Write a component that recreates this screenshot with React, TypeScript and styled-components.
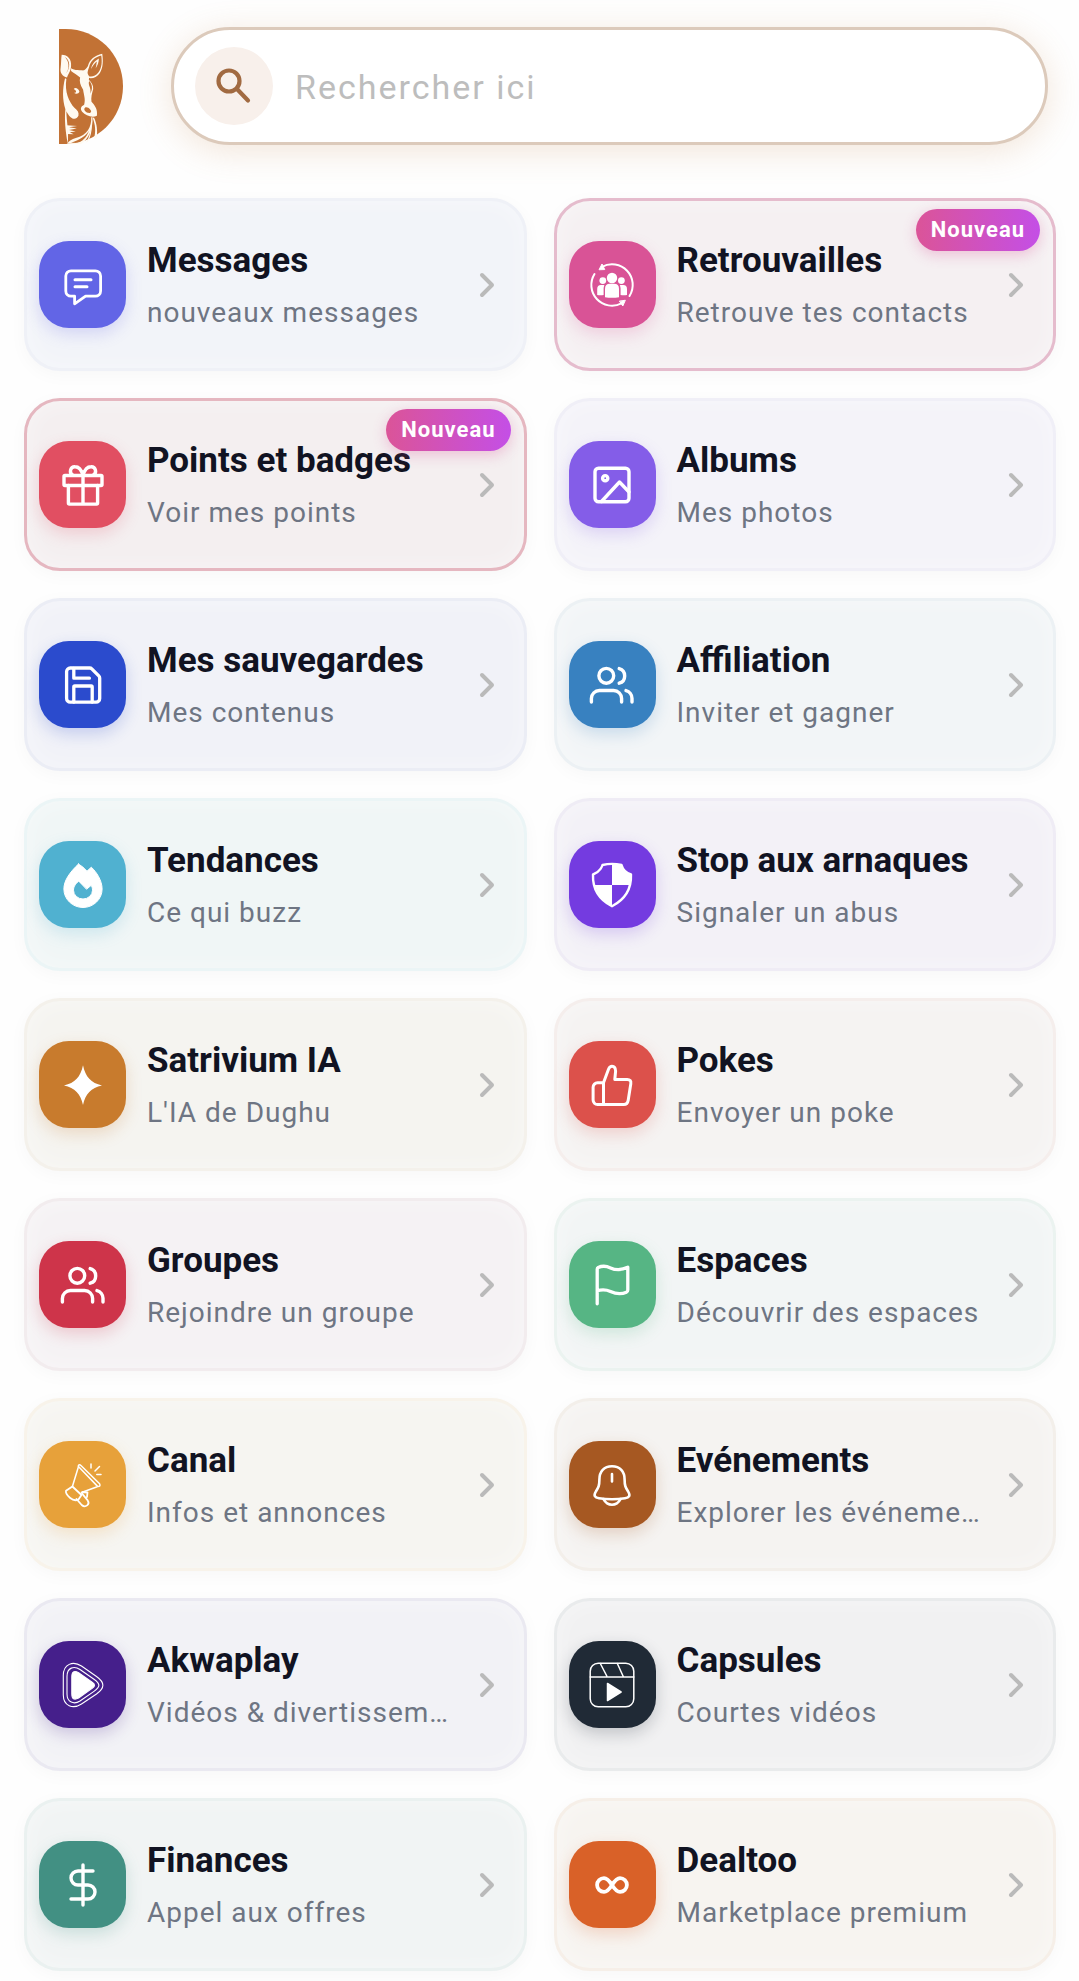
import { ReactNode } from 'react';
import styled, { createGlobalStyle } from 'styled-components';
import { ChevronRight, DollarSign } from 'lucide-react';

const GlobalStyle = createGlobalStyle`
  *, *::before, *::after {
    box-sizing: border-box;
  }
  body {
    margin: 0;
    background: #fefefe;
    font-family: Roboto, 'Liberation Sans', sans-serif;
  }
`;

const Page = styled.div`
  padding: 27px 0 10px;
  overflow: hidden;
`;

const Header = styled.header`
  display: flex;
  align-items: center;
  gap: 48px;
  padding: 0 31px 0 59px;
`;

const Logo = styled.a`
  display: flex;
  flex-shrink: 0;
`;

const SearchBar = styled.form`
  flex: 1;
  min-width: 0;
  display: flex;
  align-items: center;
  gap: 22px;
  height: 118px;
  padding: 0 28px 0 21px;
  background: #fff;
  border: 3px solid #dccabb;
  border-radius: 59px;
  box-shadow: 0 6px 34px rgba(193, 130, 70, 0.2);
`;

const SearchButton = styled.button`
  display: flex;
  align-items: center;
  justify-content: center;
  flex-shrink: 0;
  width: 78px;
  height: 78px;
  padding: 0;
  border: none;
  border-radius: 50%;
  background: #f8f0eb;
  color: #a16a41;
  cursor: pointer;
`;

const SearchInput = styled.input`
  flex: 1;
  min-width: 0;
  height: 48px;
  padding: 2px 0 0;
  border: none;
  outline: none;
  background: transparent;
  font-family: inherit;
  font-size: 34px;
  line-height: 44px;
  letter-spacing: 2px;
  color: #111322;

  &::placeholder {
    color: #bdbdbd;
    opacity: 1;
  }
`;

const Grid = styled.main`
  display: grid;
  grid-template-columns: repeat(2, minmax(0, 1fr));
  gap: 27px;
  padding: 53px 23px 0 24px;
`;

const Card = styled.a<{ $bg: string; $border: string }>`
  position: relative;
  display: flex;
  align-items: center;
  gap: 21px;
  min-height: 173px;
  padding: 12px 17px 12px 12px;
  background: ${(props) => props.$bg};
  border: 3px solid ${(props) => props.$border};
  border-radius: 36px;
  box-shadow: 0 4px 18px rgba(20, 20, 40, 0.03), inset 0 0 24px rgba(255, 255, 255, 0.4);
  text-decoration: none;
`;

const IconTile = styled.span<{ $color: string }>`
  display: flex;
  align-items: center;
  justify-content: center;
  flex-shrink: 0;
  width: 87px;
  height: 87px;
  border-radius: 30px;
  background: ${(props) => props.$color};
  box-shadow: 0 6px 16px ${(props) => props.$color}38;
  color: #fff;
`;

const CardText = styled.span`
  flex: 1;
  min-width: 0;
  display: flex;
  flex-direction: column;
  gap: 12px;
`;

const Title = styled.span`
  font-size: 35px;
  font-weight: 700;
  line-height: 44px;
  white-space: nowrap;
  color: #111322;
`;

const Subtitle = styled.span`
  font-size: 28px;
  line-height: 36px;
  letter-spacing: 1px;
  white-space: nowrap;
  overflow: hidden;
  text-overflow: ellipsis;
  color: #6e7583;
`;

const Arrow = styled(ChevronRight)`
  flex-shrink: 0;
  margin-left: -16px;
  color: #bababa;
`;

const Badge = styled.span`
  position: absolute;
  top: 8px;
  right: 13px;
  padding: 0 15px;
  border-radius: 21px;
  background: linear-gradient(90deg, #db5498, #c44fe6);
  box-shadow: 0 4px 14px rgba(219, 84, 152, 0.3);
  font-size: 22px;
  font-weight: 700;
  line-height: 42px;
  letter-spacing: 1px;
  color: #fff;
`;

type IconProps = { stroke?: number; children: ReactNode };

function Icon({ stroke = 3, children }: IconProps) {
  return (
    <svg
      width="48"
      height="48"
      viewBox="0 0 48 48"
      fill="none"
      stroke="currentColor"
      strokeWidth={stroke}
      strokeLinecap="round"
      strokeLinejoin="round"
      aria-hidden="true"
    >
      {children}
    </svg>
  );
}

const usersIcon = (
  <Icon stroke={3.4}>
    <circle cx="18.3" cy="14.8" r="7.4" />
    <path d="M3.4 41v-3.5a8 8 0 0 1 8-8h14.2a8 8 0 0 1 8 8V41" />
    <path d="M31.2 7.6a7.6 7.6 0 0 1 0 14.6M38 29.6a8 8 0 0 1 6 7.8V41" />
  </Icon>
);

const messageIcon = (
  <Icon stroke={2.8}>
    <path d="M12 9.8h24.4a5.2 5.2 0 0 1 5.2 5.2v15a5.2 5.2 0 0 1-5.2 5.2H26.6L15.6 42.8V35.2H12A5.2 5.2 0 0 1 6.8 30V15A5.2 5.2 0 0 1 12 9.8z" />
    <path d="M16 18.8h16M16 25.8h12" strokeWidth="3" />
  </Icon>
);

const reunionIcon = (
  <Icon stroke={2}>
    <path d="M14 5.8A20.700 20.700 0 0 1 41.5 35M33.500 42.400A20.700 20.700 0 0 1 6.500 13" />
    <path d="M11.200 8.400l2.800-5.400 2.600 5.200zM37.200 39.600l-2.400 5.400-3.200-4.600z" fill="currentColor" strokeWidth="1" />
    <g fill="currentColor" stroke="none">
      <circle cx="24" cy="17" r="5.2" />
      <circle cx="14.8" cy="19.6" r="3.4" />
      <circle cx="33.4" cy="19.6" r="3.4" />
      <path d="M17 36.2v-8.4q0-5 5-5h4q5 0 5 5v8.4q-7 1-14 0z" />
      <path d="M9.2 34v-6q0-4 3.8-4h2.6q.4 0 .8.2-.8 1.6-.8 3.6V34q-3 .5-6.4 0z" />
      <path d="M39 34v-6q0-4-3.8-4h-2.6q-.4 0-.8.2.8 1.6.8 3.6V34q3 .5 6.4 0z" />
    </g>
  </Icon>
);

const giftIcon = (
  <Icon stroke={3.4}>
    <rect x="5" y="14.5" width="38" height="10" rx="1" />
    <path d="M9.4 24.5v17.6q0 1 1 1h27.2q1 0 1-1V24.5M24 14.5v28.6" />
    <path d="M24 14.5C22.4 8.6 19.4 5.8 16 5.8a4.4 4.4 0 0 0-2 8.4M24 14.5c1.6-5.9 4.6-8.7 8-8.7a4.4 4.4 0 0 1 2 8.4" />
  </Icon>
);

const imageIcon = (
  <Icon stroke={3.4}>
    <rect x="7" y="7.2" width="34" height="33.6" rx="3.5" />
    <circle cx="17.2" cy="17.2" r="2.6" />
    <path d="M13.5 40.5L31.5 21 41 31" />
  </Icon>
);

const saveIcon = (
  <Icon stroke={3.3}>
    <path d="M11.2 7h19.5a3 3 0 0 1 2.1.9l7 7a3 3 0 0 1 .9 2.1V37.5a3.6 3.6 0 0 1-3.6 3.6H11.2a3.6 3.6 0 0 1-3.6-3.6V10.6A3.6 3.6 0 0 1 11.2 7z" />
    <path d="M14.8 7.5v9.7h15.600M14.8 41V26q0-1 1-1h16.4q1 0 1 1v15" />
  </Icon>
);

const flameIcon = (
  <Icon stroke={1}>
    <path
      fill="currentColor"
      fillRule="evenodd"
      d="M19.5 3C10 12 4.9 20 4.9 28a19.1 18.5 0 0 0 38.2 0C43.1 19.5 37.5 11 32.3 6.2L28 10.2Q24 5.500 19.5 3zM19.5 20.3c-3.5 3.2-5 5.700-5 8.9a9.5 8.8 0 0 0 19 0c0-1.8-.5-3.5-1.5-4.700l-4.2 3.5z"
    />
  </Icon>
);

const shieldIcon = (
  <Icon stroke={2.4}>
    <path d="M14.5 4Q24 1.800 33.5 4 35.500 11 43 13.5C43.500 27 37 38.500 24 45.200 11 38.500 4.500 27 5 13.500 12.500 11 14.500 4 14.500 4z" />
    <path
      fill="currentColor"
      stroke="none"
      d="M24 3q6 0 9.500 1 2 7 9.500 9.500.1 5.500-1.500 10.500H24zM6.500 24H24v21Q10.500 38 6.500 24z"
    />
  </Icon>
);

const sparkIcon = (
  <Icon stroke={0}>
    <path fill="currentColor" d="M24 4.3C26.5 16 32 22 43 24.5 32 27 26.5 32.5 24 44 21.5 32.5 16 27 5 24.5 16 22 21.5 16 24 4.3z" />
  </Icon>
);

const thumbIcon = (
  <Icon stroke={3}>
    <path d="M15.5 21.8L20.6 8q1.2-2.8 3.4-2.8 3.6 0 3.6 5l-.8 8.300h12.4q4.2 0 3.6 4.2l-2.6 16.5q-.7 4.3-4.4 4.3H9.5a4.4 4.4 0 0 1-4.4-4.4V26.2a4.4 4.4 0 0 1 4.4-4.4h6v21.5" />
  </Icon>
);

const flagIcon = (
  <Icon stroke={3.3}>
    <path d="M9.2 42.8V8.2Q9.2 7 10.2 6.5C14 4.8 18.5 5 22.5 6.9 28 9.4 33.5 9.3 39.8 6.3V29q0 1.6-1.4 2.2C33 33.5 28 33 22.5 30.5 17.5 28.2 14 28.3 9.2 29.8" />
  </Icon>
);

const megaphoneIcon = (
  <Icon stroke={1.5}>
    <path d="M19.2 5.2q.8-2.6 3-.4L40.600 22.800q1.400 2.800-1.800 2.800zM19.2 5.200l19.400 20.400" />
    <path d="M19.2 6.500L13.400 25.500M37.500 26L22.500 31.500" />
    <path d="M13.400 25.500l9.100 8.500-2.900 4.200q-3.800 2.600-8.400-1.200-5-4.200-4.200-7.200z" strokeWidth="1.8" />
    <path d="M17.500 38l5.200 6q2.800 2.400 5.400.400 2.600-2.200.6-5L23 32.500M23.500 31l5 .5-.5 4.5" strokeWidth="1.8" />
    <path d="M32 3v4M40.500 5.500L36 10M37.800 13.500H42" />
  </Icon>
);

const bellIcon = (
  <Icon stroke={2.6}>
    <path d="M24 5.2c-8 0-12.6 5.400-12.6 13.2 0 6.6-1 8-3.6 12.2-2.4 3.8-1.2 6 3.2 6.700 8.6 1.2 17.4 1.2 26 0 4.4-.7 5.6-2.9 3.2-6.700-2.600-4.200-3.600-5.600-3.600-12.200C36.600 10.600 32 5.200 24 5.200zM24 13v7.500" />
    <path d="M15.500 38.200q3 5.600 8.500 5.600t8.500-5.600" />
  </Icon>
);

const playIcon = (
  <Icon stroke={1.1}>
    <path d="M4.3 14.5C4.3 3 14-.5 22.5 5l15 10.5c8.5 6 8.5 11.5 0 17.5L22.5 43C14 48.5 4.3 45 4.3 34z" />
    <path d="M8 15.5C8 6.5 15 4.5 21 8.500L35 18.200c6.500 4.600 6.500 7.600 0 12.200L21 40C15 43.800 8 41.500 8 33z" />
    <path
      d="M12.800 16q0-8 6.800-4.300L33.500 21.500q4 2.800 0 5.600L19.600 37q-6.800 3.500-6.800-4.300z"
      fill="currentColor"
    />
  </Icon>
);

const reelIcon = (
  <Icon stroke={1.5}>
    <rect x="2.2" y="2.2" width="43.6" height="43.6" rx="8" />
    <path d="M2.2 16h43.6M12.3 2.5L19.3 16M29.3 2.5L35.5 16" />
    <path d="M19.5 22.5l13.6 8.5-13.6 8.5z" fill="currentColor" />
  </Icon>
);

const infinityIcon = (
  <Icon stroke={3.8}>
    <path d="M24 24c-2.800-4.500-5-6.900-8-6.900a6.900 6.900 0 0 0 0 13.800c3 0 5.200-2.400 8-6.900s5-6.900 8-6.900a6.900 6.900 0 0 1 0 13.800c-3 0-5.200-2.400-8-6.900z" />
  </Icon>
);

type MenuItem = {
  title: string;
  subtitle: string;
  color: string;
  bg: string;
  border: string;
  icon: ReactNode;
  isNew?: boolean;
};

const menuItems: MenuItem[] = [
  { title: 'Messages', subtitle: 'nouveaux messages', color: '#6265e6', bg: '#f2f4f9', border: '#eff1f7', icon: messageIcon },
  { title: 'Retrouvailles', subtitle: 'Retrouve tes contacts', color: '#d95396', bg: '#f5f0f2', border: '#e5bccd', icon: reunionIcon, isNew: true },
  { title: 'Points et badges', subtitle: 'Voir mes points', color: '#e14f62', bg: '#f4eff0', border: '#e5b7c0', icon: giftIcon, isNew: true },
  { title: 'Albums', subtitle: 'Mes photos', color: '#845de8', bg: '#f4f3f9', border: '#f0eff7', icon: imageIcon },
  { title: 'Mes sauvegardes', subtitle: 'Mes contenus', color: '#2b4bcd', bg: '#f1f2f8', border: '#ebedf5', icon: saveIcon },
  { title: 'Affiliation', subtitle: 'Inviter et gagner', color: '#3881c0', bg: '#f2f5f7', border: '#ecf1f4', icon: usersIcon },
  { title: 'Tendances', subtitle: 'Ce qui buzz', color: '#50b1d0', bg: '#f0f6f6', border: '#ebf5f6', icon: flameIcon },
  { title: 'Stop aux arnaques', subtitle: 'Signaler un abus', color: '#743be0', bg: '#f3f1f7', border: '#efecf5', icon: shieldIcon },
  { title: 'Satrivium IA', subtitle: "L'IA de Dughu", color: '#c87b2d', bg: '#f5f4f0', border: '#f4f1eb', icon: sparkIcon },
  { title: 'Pokes', subtitle: 'Envoyer un poke', color: '#dc514b', bg: '#f5f3f2', border: '#f5eeec', icon: thumbIcon },
  { title: 'Groupes', subtitle: 'Rejoindre un groupe', color: '#ce344a', bg: '#f5f2f4', border: '#f2ecee', icon: usersIcon },
  { title: 'Espaces', subtitle: 'Découvrir des espaces', color: '#56b584', bg: '#f2f5f5', border: '#ebf3f0', icon: flagIcon },
  { title: 'Canal', subtitle: 'Infos et annonces', color: '#e7a13a', bg: '#f6f5f1', border: '#f8f3ea', icon: megaphoneIcon },
  { title: 'Evénements', subtitle: 'Explorer les événeme…', color: '#a65822', bg: '#f5f3f1', border: '#f3efea', icon: bellIcon },
  { title: 'Akwaplay', subtitle: 'Vidéos & divertissem…', color: '#451f8b', bg: '#f2f2f6', border: '#eae9f1', icon: playIcon },
  { title: 'Capsules', subtitle: 'Courtes vidéos', color: '#202a36', bg: '#f1f1f2', border: '#e9ebec', icon: reelIcon },
  { title: 'Finances', subtitle: 'Appel aux offres', color: '#429083', bg: '#f1f4f4', border: '#eaf1f0', icon: <DollarSign size={48} strokeWidth={1.7} /> },
  { title: 'Dealtoo', subtitle: 'Marketplace premium', color: '#d96128', bg: '#f7f4f0', border: '#f6efe8', icon: infinityIcon },
];

function KangarooLogo() {
  return (
    <svg width="64" height="115" viewBox="58 57 191 343" preserveAspectRatio="none" aria-hidden="true">
      <path d="M58 57H78C170 57 249 130 249 228S170 400 78 400H58z" fill="#c27235" />
      <g fill="#fffaf0">
        {/* ears */}
        <path d="M66 134C84 134 96 148 94 168C93 184 86 188 82 202C68 198 60 188 63 172C65 158 64 146 66 134zM75 140C82 148 88 158 86 172C85 180 82 184 80 188C92 174 92 150 75 140z" fillRule="evenodd" />
        <path d="M187 131C164 136 150 148 144 168C136 182 126 184 112 185C126 192 136 192 140 200C150 207 170 204 180 188C190 172 190 150 187 131zM184 136C187 154 186 172 176 186C167 198 154 201 146 197C141 190 144 180 148 170C152 153 164 141 184 136z" fillRule="evenodd" />
        <path d="M177 145C165 152 156 162 154 176C159 166 165 158 171 154C169 162 170 168 167 175C173 167 177 156 177 145z" />
        {/* face */}
        <path d="M94 174C104 182 122 178 136 182C145 192 150 198 147 208C155 216 161 224 160 236C156 250 153 262 155 274C166 286 174 298 171 316C158 322 138 317 127 304C120 294 124 288 133 283C138 266 132 254 130 238C122 226 118 214 121 202C113 193 101 188 94 182zM136 291C130 296 136 304 144 307C153 309 157 303 151 297C147 292 141 289 136 291zM148 212C143 226 156 232 151 250C159 237 158 222 148 212z" fillRule="evenodd" />
        <path d="M102 236C106 230 116 234 119 244C117 250 108 252 103 247C110 248 112 242 102 236z" />
        {/* neck and body */}
        <path d="M76 204C68 236 68 268 77 296C74 328 77 358 84 399C88 360 80 330 80 302C92 326 108 332 116 316C118 306 114 300 104 292C88 274 74 244 80 206z" />
        <path d="M80 344L112 346L88 350L111 354L88 358L108 363L90 365L102 371L84 370z" />
        <path d="M154 320C156 348 142 374 108 382C96 386 88 390 82 399L124 400C146 386 160 354 158 320zM94 396C122 388 140 374 148 360C140 382 126 394 114 397z" fillRule="evenodd" />
        <path d="M162 320C172 340 173 362 171 381L162 386C169 362 166 342 159 324zM156 344C156 364 152 380 144 393L138 396C148 382 152 364 152 350z" />
      </g>
    </svg>
  );
}

function MenuCard({ title, subtitle, color, bg, border, icon, isNew }: MenuItem) {
  return (
    <Card href="#" $bg={bg} $border={border}>
      <IconTile $color={color}>{icon}</IconTile>
      <CardText>
        <Title>{title}</Title>
        <Subtitle>{subtitle}</Subtitle>
      </CardText>
      <Arrow size={40} strokeWidth={2.4} />
      {isNew && <Badge>Nouveau</Badge>}
    </Card>
  );
}

function App() {
  return (
    <Page>
      <GlobalStyle />
      <Header>
        <Logo href="#" aria-label="Dughu">
          <KangarooLogo />
        </Logo>
        <SearchBar role="search" onSubmit={(e) => e.preventDefault()}>
          <SearchButton type="submit" aria-label="Rechercher">
            <Icon stroke={4.2}>
              <circle cx="19" cy="19" r="10.5" />
              <path d="M27 27l11 11.5" />
            </Icon>
          </SearchButton>
          <SearchInput type="text" aria-label="Rechercher ici" placeholder="Rechercher ici" />
        </SearchBar>
      </Header>
      <Grid>
        {menuItems.map((item) => (
          <MenuCard key={item.title} {...item} />
        ))}
      </Grid>
    </Page>
  );
}

export default App;
